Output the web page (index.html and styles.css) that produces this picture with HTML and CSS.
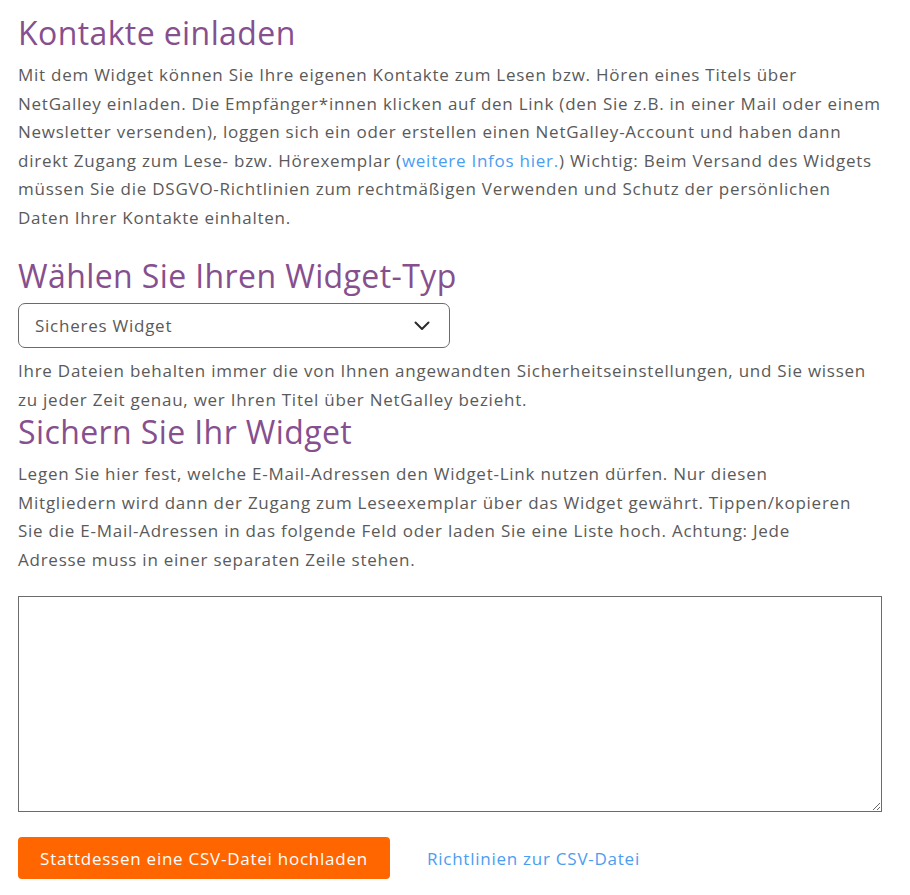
FILE: index.html
```html
<!DOCTYPE html>
<html lang="de">
<head>
<meta charset="utf-8">
<title>Kontakte einladen</title>
<link rel="stylesheet" href="styles.css">
</head>
<body>
<main class="page">
  <h1 class="title">Kontakte einladen</h1>
  <p class="text">Mit dem Widget können Sie Ihre eigenen Kontakte zum Lesen bzw. Hören eines Titels über<br>NetGalley einladen. Die Empfänger*innen klicken auf den Link (den Sie z.B. in einer Mail oder einem<br>Newsletter versenden), loggen sich ein oder erstellen einen NetGalley-Account und haben dann<br>direkt Zugang zum Lese- bzw. Hörexemplar (<a class="link" href="#">weitere Infos hier.</a>) Wichtig: Beim Versand des Widgets<br>müssen Sie die DSGVO-Richtlinien zum rechtmäßigen Verwenden und Schutz der persönlichen<br>Daten Ihrer Kontakte einhalten.</p>

  <h2 class="title title-2">Wählen Sie Ihren Widget-Typ</h2>
  <div class="select">
    <span class="select-value">Sicheres Widget</span>
    <svg class="chevron" width="16" height="10" viewBox="0 0 16 10"><polyline points="1.5,1.5 8,8 14.5,1.5" fill="none" stroke="#2b2b2b" stroke-width="2" stroke-linecap="round" stroke-linejoin="round"/></svg>
  </div>
  <p class="text">Ihre Dateien behalten immer die von Ihnen angewandten Sicherheitseinstellungen, und Sie wissen<br>zu jeder Zeit genau, wer Ihren Titel über NetGalley bezieht.</p>

  <h2 class="title title-3">Sichern Sie Ihr Widget</h2>
  <p class="text">Legen Sie hier fest, welche E-Mail-Adressen den Widget-Link nutzen dürfen. Nur diesen<br>Mitgliedern wird dann der Zugang zum Leseexemplar über das Widget gewährt. Tippen/kopieren<br>Sie die E-Mail-Adressen in das folgende Feld oder laden Sie eine Liste hoch. Achtung: Jede<br>Adresse muss in einer separaten Zeile stehen.</p>

  <textarea class="emails"></textarea>

  <div class="actions">
    <button class="btn-upload" type="button">Stattdessen eine CSV-Datei hochladen</button>
    <a class="link csv-link" href="#">Richtlinien zur CSV-Datei</a>
  </div>
</main>
</body>
</html>
```

FILE: styles.css
```css
* { box-sizing: border-box; }

html, body {
  margin: 0;
  padding: 0;
  background: #ffffff;
}

body {
  font-family: "Open Sans", "Noto Sans", sans-serif;
  color: #5a5a5a;
}

.page {
  padding: 14px 28px 0 18px;
  display: flex;
  flex-direction: column;
}

.title {
  margin: 0;
  font-size: 32px;
  line-height: 38px;
  font-weight: 400;
  letter-spacing: 0.4px;
  color: #864f8e;
}

.title-2 { margin-top: 25px; }
.title-3 { margin-top: -1px; }

.text {
  margin: 9px 0 0;
  font-size: 17px;
  line-height: 28.5px;
  letter-spacing: 0.75px;
  white-space: nowrap;
}

.link {
  color: #4a9df2;
  text-decoration: none;
}

.select {
  margin-top: 8px;
  width: 432px;
  height: 45px;
  border: 1px solid #6b6b6b;
  border-radius: 7px;
  display: flex;
  align-items: center;
  justify-content: space-between;
  padding: 0 19px 0 16px;
  font-size: 17px;
  letter-spacing: 0.75px;
  color: #5a5a5a;
}

.chevron { display: block; }

.emails {
  margin-top: 22px;
  width: 100%;
  height: 216px;
  border: 1px solid #6b6b6b;
  border-radius: 0;
  font-family: inherit;
  font-size: 16px;
  padding: 8px;
}

.actions {
  margin-top: 25px;
  display: flex;
  align-items: center;
  gap: 37px;
}

.btn-upload {
  width: 372px;
  height: 42px;
  padding: 0;
  border: none;
  border-radius: 4px;
  background: #ff6600;
  color: #ffffff;
  font-family: inherit;
  font-size: 17px;
  letter-spacing: 0.75px;
}

.csv-link {
  font-size: 17px;
  letter-spacing: 0.75px;
}
```
